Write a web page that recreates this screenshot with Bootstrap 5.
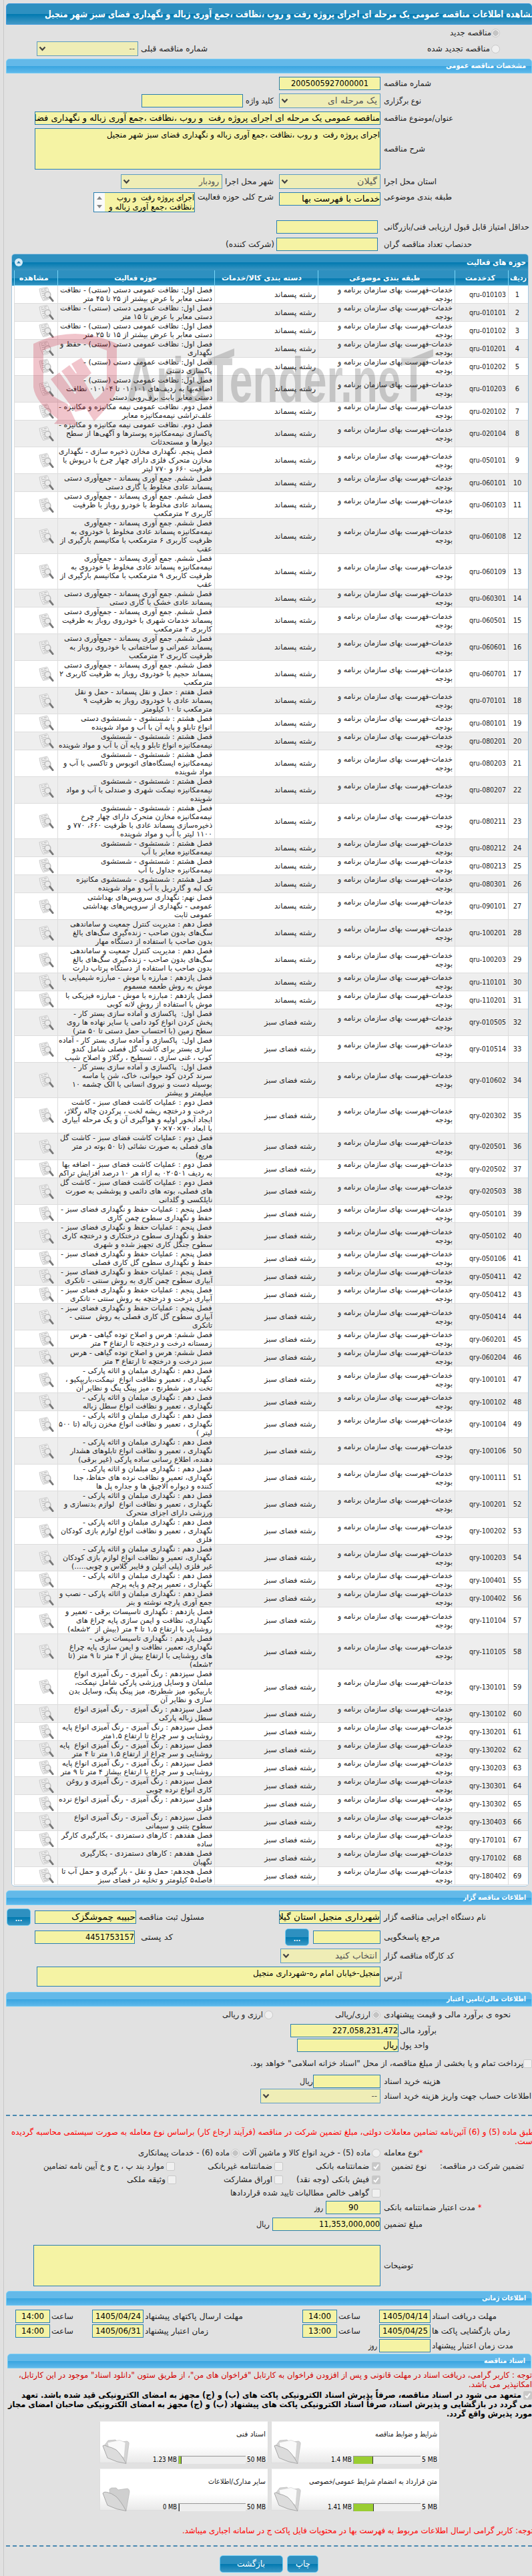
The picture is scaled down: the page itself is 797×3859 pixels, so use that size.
<!DOCTYPE html>
<html lang="fa" dir="rtl">
<head>
    <meta charset="UTF-8">
    <meta name="viewport" content="width=device-width, initial-scale=1.0">
    <title>مشاهده اطلاعات مناقصه عمومی</title>
    <link href="https://cdn.jsdelivr.net/npm/bootstrap@5.3.0/dist/css/bootstrap.min.css" rel="stylesheet">
    <style>
        body { background: #e1e1e1; color: #222; font: 12px/14px "DejaVu Sans Condensed", "DejaVu Sans", sans-serif; overflow-x: hidden; }
        .page { height: 3859px; margin-left: 5px; border-left: 1px solid #c8c8c8; padding-top: 5px; overflow: hidden; position: relative; }
        .page svg { display: block; }
        .fit { display: inline-block; white-space: pre; transform-origin: right center; flex: none; }

        .bar-title { height: 32px; margin-left: 3px; border: 1px solid #3b98dc; border-radius: 5px 5px 0 0; color: #fff; font-weight: bold; font-size: 14px; background: linear-gradient(#2e90c0 0 50%, #0079b0 50%, #4499c6); }
        .bar-title .fit { margin-right: -6px; }
        .bar-sub { height: 22px; margin-left: 3px; border: 1px solid #77cdf5; border-radius: 5px 5px 0 0; color: #fff; font-weight: bold; font-size: 11px; padding-right: 8px; background: linear-gradient(#63b9e9 0 50%, #38a5e0 50%, #5fb8ea); }
        .bar-sub.inset { margin-left: 5px; margin-right: 1px; }

        .line { display: flex; align-items: center; flex: none; }
        .h14 { height: 14px; } .h20 { height: 20px; } .h22 { height: 22px; } .h24 { height: 24px; } .h25 { height: 25px; } .h26 { height: 26px; } .h30 { height: 30px; } .h32 { height: 32px; } .h66 { height: 66px; }
        .cap { flex: none; display: flex; justify-content: flex-end; align-items: center; width: 222px; margin-left: 5px; }
        .cap-money { width: 198px; margin-left: 2px; }
        .cap-date { width: 150px; margin-left: 2px; }
        .cap-date2 { width: 236px; margin-left: 2px; }

        .fld { flex: none; height: 20px; width: 152px; border: 1px solid #2a7fb0; background: #f5f3a4; color: #000; display: flex; align-items: center; overflow: hidden; font-size: 13px; }
        .fld.sel { height: 22px; border-color: #5e9cc0; background: #efedb6; color: #555; justify-content: space-between; padding: 0 4px 0 2px; }
        .fld.area { align-items: flex-start; padding-top: 2px; font-size: 12px; }
        .mid { justify-content: center; }
        .w-subject { width: 518px; }
        .h-desc { height: 62px; }
        .w-addr { width: 515px; height: 30px; }
        .w-note { width: 520px; height: 62px; }
        .w-date { width: 77px; } .w-time { width: 52px; margin-right: 2px; } .w-82 { width: 82px; } .w-101 { width: 101px; } .w-150 { width: 150px; } .w-162 { width: 162px; } .w-180 { width: 180px; }
        .fld.mini { height: 30px; position: relative; flex-direction: column; padding-top: 0; }
        .scroller { position: absolute; left: 0; top: 0; width: 16px; height: 28px; background: #fafafa; }

        .rd { flex: none; width: 13px; height: 13px; border: 1px solid #c9c9c9; border-radius: 50%; background: #f0f0f0; }
        .rd.on { background: radial-gradient(circle, #c4c4c4 0 4px, #f0f0f0 4.5px); }
        .cb { flex: none; width: 13px; height: 13px; border: 1px solid #cacaca; border-radius: 2px; background: #f0f0f0; }
        .cb.on { background: #c8c8c8; }
        .btn-x { flex: none; border: 1px solid #6fcdf5; border-radius: 5px; color: #fff; font-size: 13px; height: 26px; line-height: 24px; text-align: center; background: linear-gradient(#2e90c0 0 50%, #0079b0 50%, #3b97c4); }
        .dots { width: 36px; font-weight: bold; font-size: 10px; line-height: 29px; }
        .w-print { width: 47px; } .w-back { width: 95px; }

        .panel { margin: 0 5px 6px 11px; border: 1px solid #a6c9e2; border-radius: 5px; background: #fff; overflow: hidden; padding-bottom: 1px; }
        .panel-top { height: 24px; background: linear-gradient(#2e90c0 0 50%, #0079b0 50%, #3c96c2); color: #fff; font-weight: bold; padding: 0 3px 0 4px; }
        .toggle { width: 12px; height: 12px; border-radius: 50%; background: #d7ecf8; }
        .grid-box { padding-left: 3px; background: linear-gradient(#2e90c0 0, #2e90c0 12px, #0079b0 12px, #3c96c2 23px, #fff 23px); }
        .grid { width: 770px; table-layout: fixed; border-collapse: separate; border-spacing: 0; font-size: 11px; line-height: 13px; }
        .grid th { height: 23px; color: #fff; text-align: center; padding: 0; border-left: 1px solid #77d5f7; border-bottom: 1px solid #77d5f7; white-space: nowrap; }
        .grid td { padding: 0 3px 0 0; border-left: 1px solid #ddd; border-bottom: 1px solid #ddd; vertical-align: middle; white-space: nowrap; background: #fff; }
        .grid tr:nth-child(even) td { background: #eee; }
        .grid td:first-child { text-align: center; }
        .grid td .fit { display: block; width: max-content; }
        .grid td:last-child svg { margin-right: 2px; }

        .stamp { position: absolute; left: 44px; top: 495px; opacity: .24; pointer-events: none; direction: ltr; }
        .stamp text { direction: ltr; font: bold 94px "Liberation Sans", sans-serif; }
        .sep { border-top: 2px dashed #3a80ac; margin-left: 3px; height: 2px; opacity: .9; }
        .red { color: #f00; } .darkred { color: #d40000; }
        .doc { width: 253px; height: 63px; border: 1px solid #ddd; border-top-color: #eee; background: linear-gradient(#fff 60%, #e9e9e9); font-size: 11px; padding: 12px 3px 0 3px; }
        .usage { margin-top: 11px; }
        .meter-box { width: 101px; height: 12px; border: 1px solid #999; border-width: 1px 0 0 1px; background: #eee; direction: ltr; }
        .meter-box div { height: 100%; background: #9acd32; border-right: 1px solid #333; }
        .docs { gap: 8px 4px; width: 510px; margin: 4px 138px 0 0; }
        .actions { margin-top: 13px; padding-right: 320px; gap: 6px; }

        /* vertical steps */
        .sp1 { margin-top: 1px; } .sp2 { margin-top: 2px; } .sp3 { margin-top: 3px; } .sp5 { margin-top: 5px; } .sp7 { margin-top: 7px; } .sp9 { margin-top: 9px; } .sp15 { margin-top: 15px; } .sp16 { margin-top: 16px; } .sp17 { margin-top: 17px; } .sp23 { margin-top: 23px; }
        /* space before an item, to its right */
        .b2 { margin-right: 2px; } .b3 { margin-right: 3px; } .b6 { margin-right: 6px; } .b12 { margin-right: 12px; } .b20 { margin-right: 20px; } .b23 { margin-right: 20px; } .b28 { margin-right: 28px; } .b48 { margin-right: 48px; } .b49 { margin-right: 49px; } .b71 { margin-right: 71px; } .b93 { margin-right: 93px; } .b112 { margin-right: 112px; } .b168 { margin-right: 168px; } .b329 { margin-right: 329px; }
        .a9 { margin-left: 9px; } .a16 { margin-left: 16px; }
        .bleed { margin-right: -4px; } .bleed-sm { margin-right: -2px; }
    </style>
</head>
<body>
<svg width="0" height="0" class="position-absolute">
    <defs>
        <symbol id="i-doc" viewBox="0 0 24 24">
            <path d="M1 3.500L13 .7Q15.500 3.500 16 8L19.500 17Q15 21 7 22Q2 14 1 3.500Z" fill="#f1f1f1" stroke="#c4c4c4" stroke-width=".9"/>
            <path d="M3.500 5.300L6.500 4.500M8 4L12.500 3M4 8L12 6M4.600 11L10 9.500M5.500 14L9 13.200M6.500 17L10 16.500M8 19.500L15 18.300" stroke="#bdbdbd" stroke-width="1.200" fill="none"/>
            <circle cx="14" cy="12.500" r="4.600" fill="#ececec" stroke="#b9b9b9" stroke-width="1.500"/>
            <path d="M17.500 16.500L22 22" stroke="#777" stroke-width="3" stroke-linecap="round"/>
        </symbol>
        <symbol id="i-folder" viewBox="0 0 42 38">
            <path d="M3 10L9 2L20 1L24 5L37 3Q41 4 40 8L36 36L30 34Z" fill="#d4d4d4" stroke="#bbb" stroke-width=".7"/>
            <path d="M8 5L26 1.500L35 5L33 28L10 14Z" fill="#fafafa" stroke="#c9c9c9" stroke-width=".6"/>
            <path d="M1 10Q3 8 8 11Q14 12 21 16Q28 22 36 36.500Q22 35 8 28Z" fill="#dcdcdc" stroke="#a8a8a8" stroke-width="1"/>
        </symbol>
        <symbol id="i-folder2" viewBox="0 0 42 38">
            <path d="M11 4L14 2L21 2L24 5L38 3Q41 4 41 8L36 36L12 20Z" fill="#cfcfcf" stroke="#b5b5b5" stroke-width=".7"/>
            <path d="M1 10Q3 7 9 9Q14 10 21 15Q28 22 36 36.500Q22 35 8 28Z" fill="#d8d8d8" stroke="#a8a8a8" stroke-width="1"/>
        </symbol>
        <symbol id="i-arrow" viewBox="0 0 11 8"><path d="M1.500 1.500L5.500 5.800L9.500 1.500" fill="none" stroke="#444" stroke-width="2.200"/></symbol>
        <symbol id="i-tick" viewBox="0 0 11 11"><path d="M2 6L4.500 8.500L9 2.500" fill="none" stroke="#fff" stroke-width="2"/></symbol>
    </defs>
</svg>

<div class="page">
    <div class="bar-title d-flex align-items-center"><span class="fit" data-w="735">مشاهده اطلاعات مناقصه عمومی یک مرحله ای اجرای پروژه رفت و روب ،نظافت ،جمع آوری زباله و نگهداری فضای سبز شهر منجیل</span></div>

    <div class="line h24"><span class="rd on b48"></span><span class="fit me-0 b2" data-w="62">مناقصه جدید</span></div>
    <div class="line h24">
        <span class="rd b48"></span><span class="fit b2" data-w="94">مناقصه تجدید شده</span>
        <span class="fit b329" data-w="100">شماره مناقصه قبلی</span>
        <div class="fld sel me-1"><span>--</span><svg width="11" height="8"><use href="#i-arrow"/></svg></div>
    </div>

    <!-- tender details -->
    <div class="bar-sub d-flex align-items-center sp3"><span class="fit" data-w="120">مشخصات مناقصه عمومی</span></div>
    <div class="line h26 sp2"><div class="cap"><span class="fit" data-w="71">شماره مناقصه</span></div><div class="fld mid"><span class="fit" data-w="116">2005005927000001</span></div></div>
    <div class="line h26">
        <div class="cap"><span class="fit" data-w="56">نوع برگزاری</span></div>
        <div class="fld sel"><span class="fit" data-w="74">یک مرحله ای</span><svg width="11" height="8"><use href="#i-arrow"/></svg></div>
        <span class="fit me-2 ms-1" data-w="42">کلید واژه</span>
        <div class="fld"></div>
    </div>
    <div class="line h26"><div class="cap"><span class="fit" data-w="104">عنوان/موضوع مناقصه</span></div><div class="fld w-subject"><span class="fit" data-w="619">مناقصه عمومی یک مرحله ای اجرای پروژه رفت  و روب ،نظافت ،جمع آوری زباله و نگهداری فضای سبز شهر منجیل</span></div></div>
    <div class="line h66"><div class="cap"><span class="fit" data-w="62">شرح مناقصه</span></div><div class="fld area w-subject h-desc"><span class="fit" data-w="409">اجرای پروژه رفت  و روب ،نظافت ،جمع آوری زباله و نگهداری فضای سبز شهر منجیل</span></div></div>
    <div class="line h32">
        <div class="cap"><span class="fit" data-w="79">استان محل اجرا</span></div>
        <div class="fld sel"><span class="fit" data-w="30">گیلان</span><svg width="11" height="8"><use href="#i-arrow"/></svg></div>
        <span class="fit me-2 ms-1" data-w="73">شهر محل اجرا</span>
        <div class="fld sel"><span class="fit" data-w="30">رودبار</span><svg width="11" height="8"><use href="#i-arrow"/></svg></div>
    </div>
    <div class="line h30 align-items-start">
        <div class="cap"><span class="fit" data-w="102">طبقه بندی موضوعی</span></div>
        <div class="fld"><span class="fit" data-w="117">خدمات با فهرست بها</span></div>
        <span class="fit me-2 ms-1" data-w="114">شرح کلی حوزه فعالیت</span>
        <div class="fld area mini"><span class="fit" data-w="116">اجرای پروژه رفت  و روب</span><span class="fit" data-w="128">،نظافت ،جمع آوری زباله و</span>
            <div class="scroller"><svg width="16" height="28"><path d="M8 5l4 5H4zM8 23l4-5H4z" fill="#888"/></svg></div>
        </div>
    </div>
    <div class="line h26 sp9"><div class="cap"><span class="fit" data-w="218">حداقل امتیاز قابل قبول ارزیابی فنی/بازرگانی</span></div><div class="fld me-1"></div></div>
    <div class="line h25"><div class="cap"><span class="fit" data-w="132">حدنصاب تعداد مناقصه گران</span></div><div class="fld me-1"></div><span class="fit b3" data-w="73">(شرکت کننده)</span></div>

    <!-- activity grid -->
    <div class="panel sp2">
        <div class="panel-top d-flex justify-content-between align-items-center">
            <span class="fit" data-w="89">حوزه های فعالیت</span>
            <div class="toggle"><svg width="12" height="12"><path d="M6 4l3 3.500H3z" fill="#2a7fb0"/></svg></div>
        </div>
        <div class="grid-box">
            <table class="grid">
                <colgroup><col width="30"><col width="80"><col width="205"><col width="155"><col width="235"><col width="65"></colgroup>
                <thead><tr>
                    <th><span class="fit" data-w="25">ردیف</span></th>
                    <th><span class="fit" data-w="45">کدخدمت</span></th>
                    <th><span class="fit" data-w="106">طبقه بندی موضوعی</span></th>
                    <th><span class="fit" data-w="120">دسته بندی کالا/خدمات</span></th>
                    <th><span class="fit" data-w="64">حوزه فعالیت</span></th>
                    <th><span class="fit" data-w="44">مشاهده</span></th>
                </tr></thead>
                <tbody id="rows"></tbody>
            </table>
        </div>
    </div>

    <!-- organiser -->
    <div class="bar-sub d-flex align-items-center"><span class="fit" data-w="94">اطلاعات مناقصه گزار</span></div>
    <div class="line h30 sp3">
        <div class="cap"><span class="fit" data-w="153">نام دستگاه اجرایی مناقصه گزار</span></div>
        <div class="fld"><span class="fit" data-w="162">شهرداری منجیل استان گیلان</span></div>
        <span class="fit ms-1 b112" data-w="98">مسئول ثبت مناقصه</span>
        <div class="fld"><span class="fit" data-w="96">حبیبه چموشگزک</span></div>
        <div class="btn-x dots b6">...</div>
    </div>
    <div class="line h30">
        <div class="cap"><span class="fit" data-w="84">مرجع پاسخگویی</span></div>
        <div class="fld w-101"></div>
        <div class="btn-x dots b6">...</div>
        <span class="fit b168 a9" data-w="48">کد پستی</span>
        <div class="fld w-150"><span class="fit" data-w="73">4451753157</span></div>
    </div>
    <div class="line h26"><div class="cap"><span class="fit" data-w="105">کد کارگاه مناقصه گزار</span></div><div class="fld sel w-150"><span class="fit" data-w="63">انتخاب کنید</span><svg width="11" height="8"><use href="#i-arrow"/></svg></div></div>
    <div class="line h32 sp2"><div class="cap"><span class="fit" data-w="27">آدرس</span></div><div class="fld area w-addr"><span class="fit" data-w="190">منجیل-خیابان امام ره-شهرداری منجیل</span></div></div>

    <!-- finance -->
    <div class="bar-sub d-flex align-items-center sp7"><span class="fit" data-w="119">اطلاعات مالی/تامین اعتبار</span></div>
    <div class="line h24">
        <div class="cap"><span class="fit" data-w="190">نحوه ی برآورد مالی و قیمت پیشنهادی</span></div>
        <span class="rd on"></span><span class="fit b2" data-w="53">ارزی/ریالی</span>
        <span class="rd b93"></span><span class="fit b2" data-w="61">ارزی و ریالی</span>
    </div>
    <div class="line h22 sp1"><div class="cap cap-money"><span class="fit" data-w="55">برآورد مالی</span></div><div class="fld w-162"><span class="fit" data-w="98">227,058,231,472</span></div></div>
    <div class="line h22"><div class="cap cap-money"><span class="fit" data-w="43">واحد پول</span></div><div class="fld"><span class="fit" data-w="22">ریال</span></div></div>
    <div class="line h32"><span class="cb"></span><span class="fit" data-w="409">پرداخت تمام و یا بخشی از مبلغ مناقصه، از محل "اسناد خزانه اسلامی" خواهد بود.</span></div>
    <div class="line h22"><div class="cap"><span class="fit" data-w="85">هزینه خرید اسناد</span></div><div class="fld w-101"></div><span class="fit" data-w="20">ریال</span></div>
    <div class="line h22"><div class="cap"><span class="fit" data-w="221">اطلاعات حساب جهت واریز هزینه خرید اسناد</span></div><div class="fld sel w-180"><span>--</span><svg width="11" height="8"><use href="#i-arrow"/></svg></div></div>
    <div class="sep sp17"></div>

    <div class="line red h14 sp17"><span class="fit bleed" data-w="784">طبق ماده (5) و (6) آئین‌نامه تضامین معاملات دولتی، مبلغ تضمین شرکت در مناقصه (فرآیند ارجاع کار) براساس نوع معامله به صورت سیستمی محاسبه گردیده</span></div>
    <div class="line red h14"><span class="fit bleed" data-w="30">است.</span></div>
    <div class="line h20">
        <div class="cap"><span class="red">*</span><span class="fit" data-w="53">نوع معامله</span></div>
        <span class="rd"></span><span class="fit b2" data-w="192">ماده (5) - خرید انواع کالا و ماشین آلات</span>
        <span class="rd on me-1"></span><span class="fit b2" data-w="137">ماده (6) - خدمات پیمانکاری</span>
    </div>
    <div class="line h20">
        <span class="fit b12" data-w="126">تضمین شرکت در مناقصه:</span><span class="fit b20 a16" data-w="53">نوع تضمین</span>
        <span class="cb on"><svg width="11" height="11"><use href="#i-tick"/></svg></span><span class="fit me-1" data-w="80">ضمانتنامه بانکی</span>
        <span class="cb b49"></span><span class="fit b3" data-w="97">ضمانتنامه غیربانکی</span>
        <span class="cb b49"></span><span class="fit b3" data-w="181">موارد بند پ ، ح و خ آیین نامه تضامین</span>
    </div>
    <div class="line h20">
        <div class="cap"></div>
        <span class="cb on"><svg width="11" height="11"><use href="#i-tick"/></svg></span><span class="fit me-1" data-w="109">فیش بانکی (وجه نقد)</span>
        <span class="cb b23"></span><span class="fit b3" data-w="73">اوراق مشارکت</span>
        <span class="cb b71"></span><span class="fit b3" data-w="58">وثیقه ملکی</span>
    </div>
    <div class="line h20"><div class="cap"></div><span class="cb"></span><span class="fit me-1" data-w="208">گواهی خالص مطالبات تایید شده قراردادها</span></div>
    <div class="line h24"><div class="cap"><span class="red ms-1">*</span><span class="fit" data-w="137">مدت اعتبار ضمانتنامه بانکی</span></div><div class="fld w-82 mid"><span class="fit" data-w="15">90</span></div><span class="fit me-1" data-w="13">روز</span></div>
    <div class="line h26"><div class="cap"><span class="fit" data-w="58">مبلغ تضمین</span></div><div class="fld w-162"><span class="fit" data-w="91">11,353,000,000</span></div><span class="fit me-1" data-w="20">ریال</span></div>
    <div class="line h66 sp16"><div class="cap"><span class="fit" data-w="44">توضیحات</span></div><div class="fld area w-note"></div></div>

    <!-- dates -->
    <div class="bar-sub d-flex align-items-center sp5"><span class="fit" data-w="66">اطلاعات زمانی</span></div>
    <div class="line h22 sp5">
        <div class="cap cap-date"><span class="fit" data-w="97">مهلت دریافت اسناد</span></div><div class="fld w-date mid"><span class="fit" data-w="68">1405/04/14</span></div>
        <span class="fit b28" data-w="33">ساعت</span><div class="fld w-time mid"><span class="fit" data-w="34">14:00</span></div>
        <div class="cap cap-date2"><span class="fit" data-w="147">مهلت ارسال پاکتهای پیشنهاد</span></div><div class="fld w-date mid"><span class="fit" data-w="68">1405/04/24</span></div>
        <span class="fit b28" data-w="33">ساعت</span><div class="fld w-time mid"><span class="fit" data-w="34">14:00</span></div>
    </div>
    <div class="line h22">
        <div class="cap cap-date"><span class="fit" data-w="117">زمان بازگشایی پاکت ها</span></div><div class="fld w-date mid"><span class="fit" data-w="68">1405/04/25</span></div>
        <span class="fit b28" data-w="33">ساعت</span><div class="fld w-time mid"><span class="fit" data-w="34">13:00</span></div>
        <div class="cap cap-date2"><span class="fit" data-w="95">زمان اعتبار پیشنهاد</span></div><div class="fld w-date mid"><span class="fit" data-w="68">1405/06/31</span></div>
        <span class="fit b28" data-w="33">ساعت</span><div class="fld w-time mid"><span class="fit" data-w="34">14:00</span></div>
    </div>
    <div class="line h22"><div class="cap cap-date"><span class="fit" data-w="122">مدت زمان اعتبار پیشنهاد</span></div><div class="fld w-date"></div><span class="fit b3" data-w="13">روز</span></div>

    <!-- documents -->
    <div class="bar-sub inset d-flex align-items-center sp1"><span class="fit" data-w="62">اسناد مناقصه</span></div>
    <div class="line darkred h14 sp3"><span class="fit" data-w="769">توجه : کاربر گرامی، دریافت اسناد در مهلت قانونی و پس از افزودن فراخوان به کارتابل "فراخوان های من"، از طریق ستون "دانلود اسناد" موجود در این کارتابل،</span></div>
    <div class="line darkred h14"><span class="fit" data-w="95">امکانپذیر می باشد.</span></div>
    <div class="line fw-bold text-black h14 sp2"><span class="cb on"><svg width="11" height="11"><use href="#i-tick"/></svg></span><span class="fit b3" data-w="749">متعهد می شود در اسناد مناقصه، صرفاً پذیرش اسناد الکترونیکی پاکت های (ب) و (ج) مجهز به امضای الکترونیکی قید شده باشد. تعهد</span></div>
    <div class="line fw-bold text-black h14"><span class="fit" data-w="785">می گردد در بازگشایی و پذیرش اسناد، صرفاً اسناد الکترونیکی پاکت های پیشنهاد (ب) و (ج) مجهز به امضای الکترونیکی صاحبان امضای مجاز</span></div>
    <div class="line fw-bold text-black h14"><span class="fit" data-w="128">مورد پذیرش واقع گردد.</span></div>

    <div class="docs d-flex flex-wrap" id="docs"></div>

    <div class="line red h14 sp23"><span class="fit bleed-sm" data-w="526">توجه: کاربر گرامی ارسال اطلاعات مربوط به فهرست بها در محتویات فایل پاکت ج در سامانه اجباری میباشد.</span></div>
    <div class="sep sp15"></div>
    <div class="actions d-flex"><div class="btn-x w-print"><span class="fit" data-w="22">چاپ</span></div><div class="btn-x w-back"><span class="fit" data-w="42">بازگشت</span></div></div>

    <!-- site watermark -->
    <svg class="stamp" width="620" height="150" viewBox="0 0 620 150">
        <g fill="#c8102e">
            <path fill-rule="evenodd" d="M0 20Q62 -10 125 20V85Q122 105 91 136L51 73L68 62L92 104Q108 92 110 78V30Q60 8 15 30V80Q18 95 51 110L66 142L31 140L37 133Q3 108 0 85Z"/>
            <path d="M26 73L39 63L62 95L80 88L92 104L78 118L63 122ZM42 61L54 52L78 83L66 92ZM57 50L72 41L87 64L72 76Z"/>
        </g>
        <g fill="#444">
            <text transform="translate(139 107) scale(.664 1)">AriaTender.neT</text>
            <path d="M262 43L301 27V38L268 52ZM562 43L599 28V39L568 52Z"/>
        </g>
    </svg>
</div>

<script>
// code, then one entry per text line
const waste = [
["010103","فصل اول: نظافت عمومی دستی (سنتی) - نظافت","دستی معابر با عرض بیشتر از ۲۵ تا ۴۵ متر"],
["010101","فصل اول: نظافت عمومی دستی (سنتی) - نظافت","دستی معابر با عرض تا ۱۵ متر"],
["010102","فصل اول: نظافت عمومی دستی (سنتی) - نظافت","دستی معابر با عرض بیشتر از ۱۵ تا ۲۵ متر"],
["010201","فصل اول: نظافت عمومی دستی (سنتی) - حفظ و","نگهداری"],
["010202","فصل اول: نظافت عمومی دستی (سنتی) -","پاکسازی دستی"],
["010203","فصل اول: نظافت عمومی دستی (سنتی) -","اضافه‌بها به ردیف‌های ۰۱۰۱۰۱ تا ۰۱۰۱۰۴ نظافت","دستی معابر بابت برف‌روبی دستی"],
["020102","فصل دوم. نظافت عمومی نیمه مکانیزه و مکانیزه -","علف‌تراشی نیمه‌مکانیزه معابر"],
["020104","فصل دوم. نظافت عمومی نیمه مکانیزه و مکانیزه -","پاکسازی نیمه‌مکانیزه پوسترها و آگهی‌ها از سطح","دیوارها و مستحدثات"],
["050101","فصل پنجم. نگهداری مخازن ذخیره سازی - نگهداری","مخازن متحرک فلزی دارای چهار چرخ با درپوش با","ظرفیت ۶۶۰ و ۷۷۰ لیتر"],
["060101","فصل ششم. جمع آوری پسماند - جمع‌آوری دستی","پسماند عادی مخلوط با گاری دستی"],
["060103","فصل ششم. جمع آوری پسماند - جمع‌آوری دستی","پسماند عادی مخلوط با خودرو روباز با ظرفیت","کاربری ۲ مترمکعب"],
["060108","فصل ششم. جمع آوری پسماند - جمع‌آوری","نیمه‌مکانیزه پسماند عادی مخلوط با خودروی به","ظرفیت کاربری ۶ مترمکعب با مکانیسم بارگیری از","عقب"],
["060109","فصل ششم. جمع آوری پسماند - جمع‌آوری","نیمه‌مکانیزه پسماند عادی مخلوط با خودروی به","ظرفیت کاربری ۹ مترمکعب با مکانیسم بارگیری از","عقب"],
["060301","فصل ششم. جمع آوری پسماند - جمع‌آوری دستی","پسماند عادی خشک با گاری دستی"],
["060501","فصل ششم. جمع آوری پسماند - جمع‌آوری دستی","پسماند خدمات شهری با خودروی روباز به ظرفیت","کاربری ۲ مترمکعب"],
["060601","فصل ششم. جمع آوری پسماند - جمع‌آوری دستی","پسماند عمرانی و ساختمانی با خودروی روباز به","ظرفیت کاربری ۲ مترمکعب"],
["060701","فصل ششم. جمع آوری پسماند - جمع‌آوری دستی","پسماند حجیم با خودروی روباز به ظرفیت کاربری ۲","مترمکعب"],
["070101","فصل هفتم : حمل و نقل پسماند - حمل و نقل","پسماند عادی با خودروی روباز به ظرفیت ۹","مترمکعب تا ۱۰ کیلومتر"],
["080101","فصل هشتم : شستشوی - شستشوی دستی","انواع تابلو و پایه آن با آب و مواد شوینده"],
["080201","فصل هشتم : شستشوی - شستشوی","نیمه‌مکانیزه انواع تابلو و پایه آن با آب و مواد شوینده"],
["080203","فصل هشتم : شستشوی - شستشوی","نیمه‌مکانیزه ایستگاه‌های اتوبوس و تاکسی با آب و","مواد شوینده"],
["080207","فصل هشتم : شستشوی - شستشوی","نیمه‌مکانیزه نیمکت شهری و صندلی با آب و مواد","شوینده"],
["080211","فصل هشتم : شستشوی - شستشوی","نیمه‌مکانیزه مخازن متحرک دارای چهار چرخ","ذخیره‌سازی پسماند عادی با ظرفیت ۶۶۰، ۷۷۰ و","۱۱۰۰ لیتر با آب و مواد شوینده"],
["080212","فصل هشتم : شستشوی - شستشوی","نیمه‌مکانیزه معابر با آب"],
["080213","فصل هشتم : شستشوی - شستشوی","نیمه‌مکانیزه جداول با آب"],
["080301","فصل هشتم : شستشوی - شستشوی مکانیزه","تک لبه و گاردریل با آب و مواد شوینده"],
["090101","فصل نهم: نگهداری سرویس‌های بهداشتی","عمومی - نگهداری از سرویس‌های بهداشتی","عمومی ثابت"],
["100201","فصل دهم : مدیریت کنترل جمعیت و ساماندهی","سگ‌های بدون صاحب - زنده‌گیری سگ‌های بالغ","بدون صاحب با استفاده از دستگاه مهار"],
["100203","فصل دهم : مدیریت کنترل جمعیت و ساماندهی","سگ‌های بدون صاحب - زنده‌گیری سگ‌های بالغ","بدون صاحب با استفاده از دستگاه پرتاب دارت"],
["110101","فصل یازدهم : مبارزه با موش - مبارزه شیمیایی با","موش به روش طعمه مسموم"],
["110201","فصل یازدهم : مبارزه با موش - مبارزه فیزیکی با","موش با استفاده از روش لانه کوبی"]
];
const green = [
["010505","فصل اول:  پاکسازی و آماده سازی بستر کار -","پخش کردن انواع کود دامی یا سایر نهاده ها روی","سطح زمین (با احتساب حمل دستی تا ۵۰ متر)"],
["010514","فصل اول:  پاکسازی و آماده سازی بستر کار - آماده","سازی بستر برای کاشت گل فصلی شامل کندو","کوب ، غنی سازی ، تسطیح ، رگلاژ و اصلاح شیب"],
["010602","فصل اول:  پاکسازی و آماده سازی بستر کار -","سرند کردن کود حیوانی، خاک، شن یا ماسه","بوسیله دست و نیروی انسانی با الک چشمه ۱۰","میلیمتر و بیشتر"],
["020302","فصل دوم : عملیات کاشت فضای سبز - کاشت","درخت و درختچه ریشه لخت ، پرکردن چاله رگلاژ،","ایجاد آبخور اولیه و هواگیری آن و یک مرحله آبیاری","با ابعاد ۷۰×۷۰×۷۰"],
["020501","فصل دوم : عملیات کاشت فضای سبز - کاشت گل","های فصلی به صورت نشائی (تا ۵۰ بوته در متر","مربع)"],
["020502","فصل دوم : عملیات کاشت فضای سبز - اضافه بها","به ردیف ۰۲۰۵۰۱ به ازاء هر ۱۰ درصد افزایش تراکم"],
["020503","فصل دوم : عملیات کاشت فضای سبز - کاشت گل","های فصلی، بوته های دائمی و پوششی به صورت","نایلکسی و گلدانی"],
["050101","فصل پنجم : عملیات حفظ و نگهداری فضای سبز -","حفظ و نگهداری سطوح چمن کاری"],
["050102","فصل پنجم : عملیات حفظ و نگهداری فضای سبز -","حفظ و نگهداری سطوح درختکاری و درختچه کاری","سطوح جنگل کاری تجهیز شده و شهری"],
["050106","فصل پنجم : عملیات حفظ و نگهداری فضای سبز -","حفظ و نگهداری سطوح گل کاری فصلی"],
["050411","فصل پنجم : عملیات حفظ و نگهداری فضای سبز -","آبیاری سطوح چمن کاری به روش سنتی - تانکری"],
["050412","فصل پنجم : عملیات حفظ و نگهداری فضای سبز -","آبیاری درخت و درختچه به روش سنتی - تانکری"],
["050414","فصل پنجم : عملیات حفظ و نگهداری فضای سبز -","آبیاری سطوح گل کاری فصلی به روش  سنتی -","تانکری"],
["060201","فصل ششم: هرس و اصلاح توده گیاهی - هرس","زمستانه درخت و درختچه تا ارتفاع ۳ متر"],
["060204","فصل ششم: هرس و اصلاح توده گیاهی - هرس","سبز درخت و درختچه تا ارتفاع ۳ متر"],
["100101","فصل دهم : نگهداری مبلمان و اثاثه پارکی -","نگهداری ، تعمیر و نظافت انواع  نیمکت،باربیکیو ،","تخت ، میز شطرنج ، میز پینگ پنگ و نظایر آن"],
["100102","فصل دهم : نگهداری مبلمان و اثاثه پارکی -","نگهداری ، تعمیر و نظافت انواع سطل زباله"],
["100104","فصل دهم : نگهداری مبلمان و اثاثه پارکی -","نگهداری ، تعمیر و نظافت انواع مخزن زباله (تا ۵۰۰","لیتر )"],
["100106","فصل دهم : نگهداری مبلمان و اثاثه پارکی -","نگهداری ، تعمیر و نظافت انواع تابلوهای هشدار","دهنده، اطلاع رسانی ساده پارکی (غیر برقی)"],
["100111","فصل دهم : نگهداری مبلمان و اثاثه پارکی -","نگهداری، تعمیر و نظافت نرده های حفاظ، جدا","کننده و دیواره آلاچیق ها و جداره پل ها"],
["100201","فصل دهم : نگهداری مبلمان و اثاثه پارکی -","نگهداری ، تعمیر و نظافت انواع  لوازم بدنسازی و","ورزشی دارای اجزای متحرک"],
["100202","فصل دهم : نگهداری مبلمان و اثاثه پارکی -","نگهداری ، تعمیر و نظافت انواع لوازم بازی کودکان","فلزی"],
["100203","فصل دهم : نگهداری مبلمان و اثاثه پارکی -","نگهداری، تعمیر و نظافت انواع لوازم بازی کودکان","غیر فلزی (پلی اتیلن و فایبر گلاس و چوبی.....)"],
["100401","فصل دهم : نگهداری مبلمان و اثاثه پارکی -","نگهداری ، تعمیر پرچم و پایه پرچم"],
["100402","فصل دهم : نگهداری مبلمان و اثاثه پارکی - نصب و","جمع آوری پارچه نوشته و بنر"],
["110104","فصل یازدهم : نگهداری تاسیسات برقی - تعمیر و","نگهداری، نظافت و ایمن سازی پایه چراغ های","روشنایی با ارتفاع ۱,۵ تا ۴ متر (بیش از  ۲شعله)"],
["110105","فصل یازدهم : نگهداری تاسیسات برقی -","نگهداری، تعمیر، نظافت و ایمن سازی پایه چراغ","های روشنایی با ارتفاع بیش از ۴ متر تا ۹ متر (تا","۲شعله)"],
["130101","فصل سیزدهم : رنگ آمیزی - رنگ آمیزی انواع","مبلمان و وسایل ورزشی پارکی شامل نیمکت،","باربیکیو، میز شطرنج، میز پینگ پنگ، وسایل بدن","سازی و نظایر آن"],
["130102","فصل سیزدهم : رنگ آمیزی - رنگ آمیزی انواع","سطل زباله پارکی"],
["130201","فصل سیزدهم : رنگ آمیزی - رنگ آمیزی انواع پایه","روشنایی و سر چراغ تا ارتفاع ۱,۵متر"],
["130202","فصل سیزدهم : رنگ آمیزی - رنگ آمیزی انواع  پایه","روشنایی و سر چراغ از ارتفاع ۱,۵ متر تا ۴ متر"],
["130203","فصل سیزدهم : رنگ آمیزی - رنگ آمیزی انواع پایه","روشنایی و سر چراغ با ارتفاع بیشاز ۴ متر تا ۹ متر"],
["130301","فصل سیزدهم : رنگ آمیزی - رنگ آمیزی و روغن","کاری انواع نرده چوبی"],
["130302","فصل سیزدهم : رنگ آمیزی - رنگ آمیزی انواع نرده","فلزی"],
["130403","فصل سیزدهم : رنگ آمیزی - رنگ آمیزی انواع","سطوح بتنی و سیمانی"],
["170101","فصل هفدهم : کارهای دستمزدی - بکارگیری کارگر","ساده"],
["170102","فصل هفدهم : کارهای دستمزدی - بکارگیری","نگهبان"],
["180402","فصل هجدهم: حمل و نقل - بار گیری و حمل آب تا","فاصله۵ کیلومتر و تخلیه در فضای سبز"]
];

const addRows = (list, prefix, field, width, start) => list.map((r, i) => `
    <tr><td>${start + i}</td>
    <td><span class="fit" data-w="55">${prefix}-${r[0]}</span></td>
    <td><span class="fit" data-w="172">خدمات-فهرست بهای سازمان برنامه و</span><span class="fit" data-w="26">بودجه</span></td>
    <td><span class="fit" data-w="${width}">${field}</span></td>
    <td>${r.slice(1).map(t => `<span class="fit desc">${t}</span>`).join('')}</td>
    <td><svg width="23" height="24"><use href="#i-doc"/></svg></td></tr>`).join('');
document.getElementById('rows').innerHTML =
    addRows(waste, 'qru', 'رشته پسماند', 62, 1) + addRows(green, 'qry', 'رشته فضای سبز', 77, waste.length + 1);

const docs = [
    ['شرایط و ضوابط مناقصه', 93, '5 MB', '1.4 MB', 29, 'i-folder'],
    ['اسناد فنی', 44, '50 MB', '1.23 MB', 4, 'i-folder'],
    ['متن قرارداد به انضمام شرایط عمومی/خصوصی', 192, '5 MB', '1.41 MB', 30, 'i-folder'],
    ['سایر مدارک/اطلاعات', 86, '50 MB', '0 MB', 0, 'i-folder2']
];
document.getElementById('docs').innerHTML = docs.map(d => `
    <div class="doc">
        <span class="fit d-block" data-w="${d[1]}">${d[0]}</span>
        <div class="d-flex justify-content-between align-items-end">
            <div class="usage d-flex align-items-center text-black">
                <span class="fit" dir="ltr" data-w="${d[2].length === 4 ? 23 : 28}">${d[2]}</span>
                <div class="meter-box b2 ms-0"><div style="width:${d[4]}%"></div></div>
                <span class="fit b2" dir="ltr" data-w="${Math.round(d[3].length * 5.2)}">${d[3]}</span>
            </div>
            <svg class="mt-n2" width="42" height="38"><use href="#${d[5]}"/></svg>
        </div>
    </div>`).join('');

// squeeze every label to its column width
const widthOf = el => {
    const range = document.createRange();
    range.selectNodeContents(el);
    return range.getBoundingClientRect().width;
};
const ratio = 228 / widthOf(document.querySelector('.desc'));
const sizes = [...document.querySelectorAll('.fit')].map(el => [el, widthOf(el)]);
sizes.forEach(([el, w]) => {
    const to = el.dataset.w ? +el.dataset.w : Math.min(w * ratio, 230);
    el.style.width = to + 'px';
    el.style.transform = `scaleX(${to / w})`;
    if (el.dir === 'ltr') el.style.transformOrigin = 'left center';
});
</script>
<script src="https://cdn.jsdelivr.net/npm/bootstrap@5.3.0/dist/js/bootstrap.bundle.min.js"></script>
</body>
</html>
